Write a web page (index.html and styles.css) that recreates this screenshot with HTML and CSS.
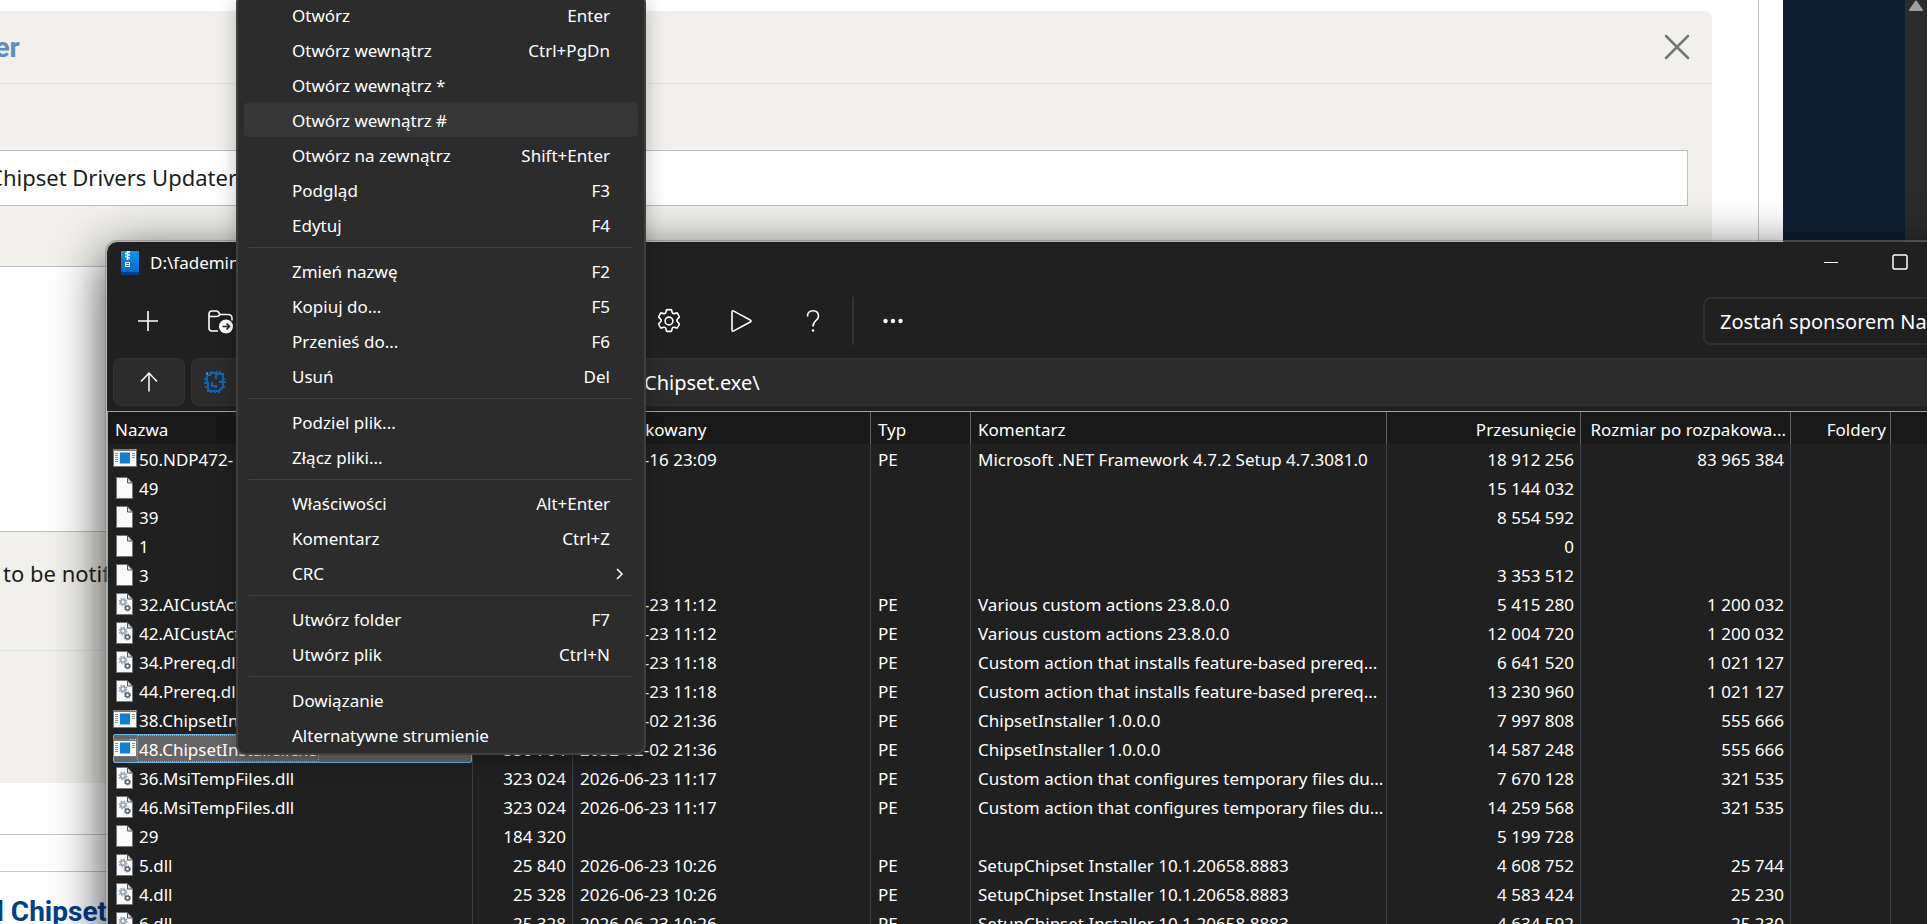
FILE: index.html
```html
<!DOCTYPE html>
<html lang="pl">
<head>
  <meta charset="UTF-8">
  <meta name="viewport" content="width=device-width, initial-scale=1.0">
  <title>NanaZip</title>
  <link rel="stylesheet" href="styles.css">
</head>
<body>
  <svg class="sprite" aria-hidden="true">
    <symbol id="i-file" viewBox="0 0 24 24">
      <path d="M3.500 1.500h10.500l5.500 5.500v15.500h-16z" fill="#fafafa" stroke="#77777a"/>
      <path d="M14.500 1.500v5.500h5z" fill="#ddd" stroke="#555"/>
    </symbol>
    <symbol id="i-dll" viewBox="0 0 24 24">
      <path d="M3.500 1.500h10.500l5.500 5.500v15.500h-16z" fill="#fafafa" stroke="#77777a"/>
      <path d="M14.500 1.500v5.500h5z" fill="#ddd" stroke="#555"/>
      <circle cx="10" cy="10" r="2.300" fill="none" stroke="#9aa5b0" stroke-width="1.800"/>
      <circle cx="10" cy="10" r="3.800" fill="none" stroke="#9aa5b0" stroke-width="1.400" stroke-dasharray="1.500 1.480"/>
      <circle cx="14.500" cy="16" r="2" fill="none" stroke="#56616b" stroke-width="1.500"/>
      <circle cx="14.500" cy="16" r="3" fill="none" stroke="#56616b" stroke-dasharray="1.200 1.150"/>
    </symbol>
    <symbol id="i-exe" viewBox="0 0 24 24">
      <path d="M.5 2.500h23v17h-23z" fill="#fafafa" stroke="#77777a"/>
      <path d="M0 3h24" stroke="#77777a" stroke-width="2"/>
      <path d="M17 2.500h1M19.500 2.500h1M22 2.500h1" stroke="#ddd"/>
      <path d="M7 5.500h10v11h-10z" fill="#0f7fd6"/>
      <path d="M2 6.500h3M2 8.500h3M2 10.500h3M2 12.500h3M2 14.500h3M19 6.500h3M19 8.500h3M19 10.500h3" stroke="#8a8f94"/>
    </symbol>
  </svg>

  <div class="desktop">
    <div class="browser">
      <main class="article">
        <section class="panel">
          <header class="panel-head">
            <h2>Updater</h2>
            <button class="panel-close" aria-label="Close">
              <svg width="26" height="26" viewBox="0 0 26 26"><path d="M2 2l22 22M24 2l-22 22" stroke="#767676" stroke-width="2.500" stroke-linecap="round"/></svg>
            </button>
          </header>
          <input class="subject" type="text" value="Chipset Drivers Updater" aria-label="Subject">
          <textarea class="message" aria-label="Message"></textarea>
          <p class="notify">to be notified</p>
          <div class="panel-foot"></div>
        </section>
        <div class="strip"></div>
        <h3 class="topic"><a href="#">Intel Chipset</a></h3>
      </main>
      <div class="gutter"></div>
      <div class="scrollbar">
        <svg width="16" height="12" viewBox="0 0 16 12"><path d="M8 1.500l6 8.500h-12z" fill="#9f9f9f" stroke="#9f9f9f" stroke-width="2" stroke-linejoin="round"/></svg>
      </div>
    </div>

    <div class="window">
      <div class="titlebar">
        <svg class="app-icon" width="18" height="24" viewBox="0 0 18 24">
          <defs><linearGradient id="zip" x2="0" y2="1"><stop offset="0" stop-color="#0a98f0"/><stop offset="1" stop-color="#0566cf"/></linearGradient></defs>
          <path d="M0 0h18v24h-18z" fill="#063f86"/>
          <path d="M0 0h18v21h-18z" fill="url(#zip)"/>
          <path d="M6.500 0v9M4 2.500h2.500M4 5.500h2.500M6.500 1h2.500M6.500 4h2.500M6.500 7h2.500" stroke="#fff" stroke-width="1.500"/>
          <path d="M4.500 11.500h4v4h-4zM5 13.500h3" fill="none" stroke="#fff"/>
        </svg>
        <span class="title">D:\fademind</span>
        <button class="caption" aria-label="Minimalizuj"><svg width="16" height="16"><path d="M1 8.500h14" stroke="#fff"/></svg></button>
        <button class="caption" aria-label="Maksymalizuj"><svg width="16" height="16"><rect x="1" y="1" width="14" height="14" rx="1.500" fill="none" stroke="#fff" stroke-width="1.500"/></svg></button>
        <button class="caption" aria-label="Zamknij"><svg width="16" height="16"><path d="M1 1l14 14M15 1l-14 14" stroke="#fff"/></svg></button>
      </div>

      <div class="toolbar">
        <button class="tool" aria-label="Dodaj"><svg width="24" height="24" viewBox="0 0 24 24"><path d="M12 2v20M2 12h20"/></svg></button>
        <button class="tool" aria-label="Wypakuj">
          <svg width="26" height="26" viewBox="0 0 26 26">
            <path d="M11 23h-6q-3 0-3-3v-14q0-3 3-3h4.500q1.500 0 2.500 2l1 1.500h8q4 0 4 4v2M2.500 8.500h6.500q2 0 3-1l1-1"/>
            <circle cx="19" cy="18.500" r="7" fill="#fff" stroke="none"/>
            <path d="M15.500 18.500h7M19.500 15.500l3 3-3 3" stroke="#202020"/>
          </svg>
        </button>
        <div class="tools-right">
          <button class="tool" aria-label="Opcje">
            <svg width="26" height="26" viewBox="0 0 26 26">
              <circle cx="13" cy="13" r="3.900"/>
              <path d="M10.500 1.900q2.500-.6 5 0l.7 2.600q.4 1.400 1.900 1.100l2.900-.7q1.700 1.800 2.400 4.200l-2 2q-1.300 1.200 0 2.600l2 2.200q-.7 2.400-2.400 4.200l-2.900-.8q-1.500-.3-1.900 1.100l-.7 2.700q-2.500.6-5 0l-.7-2.700q-.4-1.400-1.900-1.100l-2.900.8q-1.700-1.800-2.400-4.200l2-2.200q1.300-1.400 0-2.600l-2-2q.7-2.400 2.400-4.200l2.900.7q1.500.3 1.900-1.100z"/>
            </svg>
          </button>
          <button class="tool" aria-label="Test"><svg width="24" height="24" viewBox="0 0 24 24"><path d="M3 3.200q0-2 1.800-1.100l16.400 8.900q1.600 1 0 2l-16.400 8.900q-1.800.9-1.800-1.100z"/></svg></button>
          <button class="tool" aria-label="Pomoc"><svg width="24" height="24" viewBox="0 0 24 24"><path d="M6.500 7.500q0-5.800 5.500-5.800t5.500 5.300q0 2.400-2.500 4.500-3 2.500-3 6"/><circle cx="12" cy="21.500" r="1.200" fill="#fff" stroke="none"/></svg></button>
          <div class="divider"></div>
          <button class="tool" aria-label="Więcej"><svg width="24" height="24" viewBox="0 0 24 24"><g fill="#fff" stroke="none"><circle cx="4.500" cy="12" r="2.200"/><circle cx="12" cy="12" r="2.200"/><circle cx="19.500" cy="12" r="2.200"/></g></svg></button>
        </div>
        <button class="sponsor">Zostań sponsorem NanaZip</button>
      </div>

      <div class="address">
        <button class="up" aria-label="W górę"><svg width="22" height="22" viewBox="0 0 22 22"><path d="M11 20.500v-18M3 10.500l8-8.500 8 8.500" fill="none" stroke="#fff" stroke-width="1.500"/></svg></button>
        <div class="path">
          <svg width="24" height="24" viewBox="0 0 24 24" fill="none" stroke="#0a66b5" stroke-width="2">
            <path d="M4 5h3v-2h2v-2M9 3h4M14 1v3h3v-3M17 4h3v5M22 9h-2M20 9l-1 3h4M20 13v4h2M20 17l-4 4v2M16 21h-3M12 23v-2h-3M8 23v-2h-3v-4h-3M5 17v-4h-4M4 13v-4h-3M4 9v-4M9 12v4h4v2M13 4v5M16 12h3"/>
            <path d="M3 3.500h2" stroke="#23b5c9"/>
          </svg>
          <input type="text" value="Chipset.exe\" aria-label="Ścieżka">
        </div>
      </div>

      <table class="files">
        <colgroup>
          <col class="c-name"><col class="c-size"><col class="c-date"><col class="c-type"><col class="c-comment">
          <col class="c-offset"><col class="c-unpacked"><col class="c-folders"><col>
        </colgroup>
        <thead>
          <tr><th>Nazwa</th><th class="num">Rozmiar</th><th>Zmodyfikowany</th><th>Typ</th><th>Komentarz</th><th class="num">Przesunięcie</th><th class="num">Rozmiar po rozpakowa...</th><th class="num">Foldery</th><th></th></tr>
        </thead>
        <tbody id="rows"></tbody>
      </table>
    </div>

    <div class="menu">
      <button><span>Otwórz</span><kbd>Enter</kbd></button>
      <button><span>Otwórz wewnątrz</span><kbd>Ctrl+PgDn</kbd></button>
      <button><span>Otwórz wewnątrz *</span></button>
      <button class="active"><span>Otwórz wewnątrz #</span></button>
      <button><span>Otwórz na zewnątrz</span><kbd>Shift+Enter</kbd></button>
      <button><span>Podgląd</span><kbd>F3</kbd></button>
      <button><span>Edytuj</span><kbd>F4</kbd></button>
      <hr>
      <button><span>Zmień nazwę</span><kbd>F2</kbd></button>
      <button><span>Kopiuj do...</span><kbd>F5</kbd></button>
      <button><span>Przenieś do...</span><kbd>F6</kbd></button>
      <button><span>Usuń</span><kbd>Del</kbd></button>
      <hr>
      <button><span>Podziel plik...</span></button>
      <button><span>Złącz pliki...</span></button>
      <hr>
      <button><span>Właściwości</span><kbd>Alt+Enter</kbd></button>
      <button><span>Komentarz</span><kbd>Ctrl+Z</kbd></button>
      <button class="more"><span>CRC</span><svg width="8" height="14" viewBox="0 0 8 14"><path d="M1 2l5 5-5 5" fill="none" stroke="#fff" stroke-width="1.500"/></svg></button>
      <hr>
      <button><span>Utwórz folder</span><kbd>F7</kbd></button>
      <button><span>Utwórz plik</span><kbd>Ctrl+N</kbd></button>
      <hr>
      <button><span>Dowiązanie</span></button>
      <button><span>Alternatywne strumienie</span></button>
    </div>
  </div>

  <script>
    // icon, name, size, modified, type, comment, offset, unpacked size
    var files = [
      ['exe', '50.NDP472-', '', '2018-06-16 23:09', 'PE', 'Microsoft .NET Framework 4.7.2 Setup 4.7.3081.0', '18 912 256', '83 965 384'],
      ['file', '49', '', '', '', '', '15 144 032', ''],
      ['file', '39', '', '', '', '', '8 554 592', ''],
      ['file', '1', '', '', '', '', '0', ''],
      ['file', '3', '', '', '', '', '3 353 512', ''],
      ['dll', '32.AICustAct.dll', '', '2026-06-23 11:12', 'PE', 'Various custom actions 23.8.0.0', '5 415 280', '1 200 032'],
      ['dll', '42.AICustAct.dll', '', '2026-06-23 11:12', 'PE', 'Various custom actions 23.8.0.0', '12 004 720', '1 200 032'],
      ['dll', '34.Prereq.dll', '', '2026-06-23 11:18', 'PE', 'Custom action that installs feature-based prereq...', '6 641 520', '1 021 127'],
      ['dll', '44.Prereq.dll', '', '2026-06-23 11:18', 'PE', 'Custom action that installs feature-based prereq...', '13 230 960', '1 021 127'],
      ['exe', '38.ChipsetInstaller.exe', '556 704', '2032-02-02 21:36', 'PE', 'ChipsetInstaller 1.0.0.0', '7 997 808', '555 666'],
      ['exe', '48.ChipsetInstaller.exe', '556 704', '2032-02-02 21:36', 'PE', 'ChipsetInstaller 1.0.0.0', '14 587 248', '555 666'],
      ['dll', '36.MsiTempFiles.dll', '323 024', '2026-06-23 11:17', 'PE', 'Custom action that configures temporary files du...', '7 670 128', '321 535'],
      ['dll', '46.MsiTempFiles.dll', '323 024', '2026-06-23 11:17', 'PE', 'Custom action that configures temporary files du...', '14 259 568', '321 535'],
      ['file', '29', '184 320', '', '', '', '5 199 728', ''],
      ['dll', '5.dll', '25 840', '2026-06-23 10:26', 'PE', 'SetupChipset Installer 10.1.20658.8883', '4 608 752', '25 744'],
      ['dll', '4.dll', '25 328', '2026-06-23 10:26', 'PE', 'SetupChipset Installer 10.1.20658.8883', '4 583 424', '25 230'],
      ['dll', '6.dll', '25 328', '2026-06-23 10:26', 'PE', 'SetupChipset Installer 10.1.20658.8883', '4 634 592', '25 230']
    ]
    var selected = 10
    var str = ''
    for (var i = 0; i < files.length; i++) {
      var f = files[i]
      str += '<tr' + (i === selected ? ' class="selected"' : '') + '>'
      str += '<td class="name"><div><svg width="24" height="24"><use href="#i-' + f[0] + '"/></svg><span>' + f[1] + '</span></div></td>'
      for (var j = 2; j < 8; j++) {
        str += '<td' + (j === 2 || j > 5 ? ' class="num"' : '') + '>' + f[j] + '</td>'
      }
      str += '<td></td><td></td></tr>'
    }
    document.querySelector('#rows').innerHTML = str
  </script>
</body>
</html>
```
FILE: styles.css
```css
*{
  box-sizing: border-box;
}
body{
  margin: 0;
  font: 17px "Noto Sans", sans-serif;
  color: #ffffff;
}
button,
input,
textarea{
  font: inherit;
  color: inherit;
  border: 0;
  padding: 0;
  margin: 0;
  background: none;
  outline: none;
}
.sprite{
  position: absolute;
  width: 0;
  height: 0;
}
.desktop{
  position: relative;
  height: 100vh;
  overflow: hidden;
  background: #ffffff;
}

/* page behind the windows */
.browser{
  display: flex;
  height: 100%;
  color: #1c1c1c;
}
.article{
  flex: 1;
  margin-left: -120px;
  margin-right: 24px;
  padding-top: 11px;
  border-right: 1px solid #c4c4c6;
  overflow: hidden;
}
.panel{
  margin-right: 46px;
  padding-bottom: 1px;
  border-radius: 8px;
  background: #f1f0ec;
}
.panel-head{
  display: flex;
  align-items: center;
  justify-content: space-between;
  height: 73px;
  padding: 0 22px 0 40px;
  border-bottom: 1px solid #e0dfe2;
}
.panel-head h2{
  margin: 0;
  font: bold 28px Roboto, sans-serif;
  color: #5a8fbf;
}
.panel-close{
  display: flex;
}
.subject{
  display: block;
  width: calc(100% - 24px);
  height: 56px;
  margin-top: 66px;
  padding: 0 0 2px 108px;
  border: 1px solid #bcbec2;
  background: #ffffff;
  font-size: 22px;
}
.message{
  display: block;
  width: calc(100% - 24px);
  height: 266px;
  margin-top: 60px;
  border: 1px solid #bcbec2;
  background: #ffffff;
  resize: none;
}
.notify{
  margin: 0;
  height: 119px;
  padding: 25px 0 0 123px;
  line-height: 32px;
  font-size: 22px;
  border-bottom: 1px solid #dde1e6;
}
.panel-foot{
  height: 131px;
}
.strip{
  height: 38px;
  margin-top: 51px;
  border: 1px solid #c4c4c6;
  border-width: 1px 0;
}
.topic{
  margin: 24px 0 0 68px;
  font: bold 28px/32px Roboto, sans-serif;
}
.topic a{
  color: #00408a;
  text-decoration: none;
}
.gutter{
  width: 122px;
  background: #0d2035;
}
.scrollbar{
  width: 22px;
  padding-left: 3px;
  background: #2c2c2c;
}
.scrollbar svg{
  display: block;
}

/* file manager window */
.window{
  position: absolute;
  left: 105px;
  right: -78px;
  top: 240px;
  bottom: -40px;
  border: 2px solid rgba(120, 120, 120, .5);
  border-radius: 12px;
  background: #202020;
  background-clip: padding-box;
  box-shadow: 0 14px 52px rgba(0, 0, 0, .75);
  overflow: hidden;
}
.titlebar{
  display: flex;
  align-items: center;
  height: 42px;
  padding-left: 14px;
}
.title{
  flex: 1;
  margin-left: 11px;
  padding-bottom: 2px;
}
.caption{
  width: 69px;
  height: 42px;
}
.toolbar{
  display: flex;
  align-items: center;
  height: 74px;
  padding-left: 5px;
}
.tool{
  display: flex;
  align-items: center;
  justify-content: center;
  width: 72px;
  height: 48px;
}
.tool svg{
  fill: none;
  stroke: #ffffff;
  stroke-width: 1.6;
}
.tools-right{
  display: flex;
  flex: 1;
  margin-left: 377px;
}
.divider{
  width: 2px;
  margin: 0 3px;
  background: #333333;
}
.sponsor{
  width: 300px;
  height: 48px;
  padding-left: 15px;
  border: 2px solid #303030;
  border-radius: 8px;
  font-size: 20px;
  text-align: left;
}
.address{
  display: flex;
  gap: 6px;
  padding: 0 0 5px 6px;
}
.up{
  display: flex;
  align-items: center;
  justify-content: center;
  width: 72px;
  height: 48px;
  border: 1px solid #333333;
  border-radius: 8px;
  background: #2c2c2c;
}
.path{
  display: flex;
  flex: 1;
  align-items: center;
  height: 48px;
  padding-left: 11px;
  border: 1px solid #333333;
  border-radius: 8px;
  background: #2c2c2c;
}
.path input{
  flex: 1;
  margin-left: 417px;
  font-size: 20px;
}
.files{
  width: 100%;
  table-layout: fixed;
  border-collapse: separate;
  border-spacing: 0;
  border-top: 1px solid #a0a0a6;
  border-left: 1px solid #a0a0a6;
}
.c-name{
  width: 365px;
}
.c-size{
  width: 100px;
}
.c-date{
  width: 298px;
}
.c-type{
  width: 100px;
}
.c-comment{
  width: 416px;
}
.c-offset{
  width: 194px;
}
.c-unpacked{
  width: 210px;
}
.c-folders{
  width: 100px;
}
.files th{
  height: 32px;
  padding: 2px 4px 0 7px;
  border-right: 1px solid #636363;
  background: #191919;
  font-weight: normal;
  text-align: left;
  white-space: nowrap;
}
.files td{
  height: 29px;
  padding: 2px 6px 0 7px;
  border-right: 1px solid #3c4048;
  line-height: 27px;
  white-space: nowrap;
}
.files .num{
  text-align: right;
}
.files .name{
  padding: 0 0 0 5px;
}
.name div{
  display: flex;
  align-items: center;
  height: 29px;
  border: 1px solid transparent;
}
.name svg{
  margin-left: -1px;
}
.name span{
  padding: 2px 2px 0;
  line-height: 25px;
}
.selected .name div{
  border-color: #61b8ef;
  border-radius: 2px;
  background: #666666;
}
.selected .name span{
  outline: 1px dotted #aaaaaa;
  outline-offset: -1px;
}

/* context menu */
.menu{
  position: absolute;
  left: 236px;
  top: -7px;
  width: 410px;
  padding: 2px 6px 1px;
  border: 2px solid #404040;
  border-radius: 10px;
  background: #2c2c2c;
  box-shadow: 0 8px 20px rgba(0, 0, 0, .25);
}
.menu button{
  display: flex;
  align-items: center;
  justify-content: space-between;
  width: 100%;
  height: 35px;
  padding: 2px 28px 0 48px;
  border-radius: 5px;
}
.menu .active{
  background: #363636;
}
.menu .more{
  padding-right: 14px;
}
.menu kbd{
  font: inherit;
}
.menu hr{
  height: 1px;
  margin: 5px;
  border: 0;
  background: #404040;
}
```
